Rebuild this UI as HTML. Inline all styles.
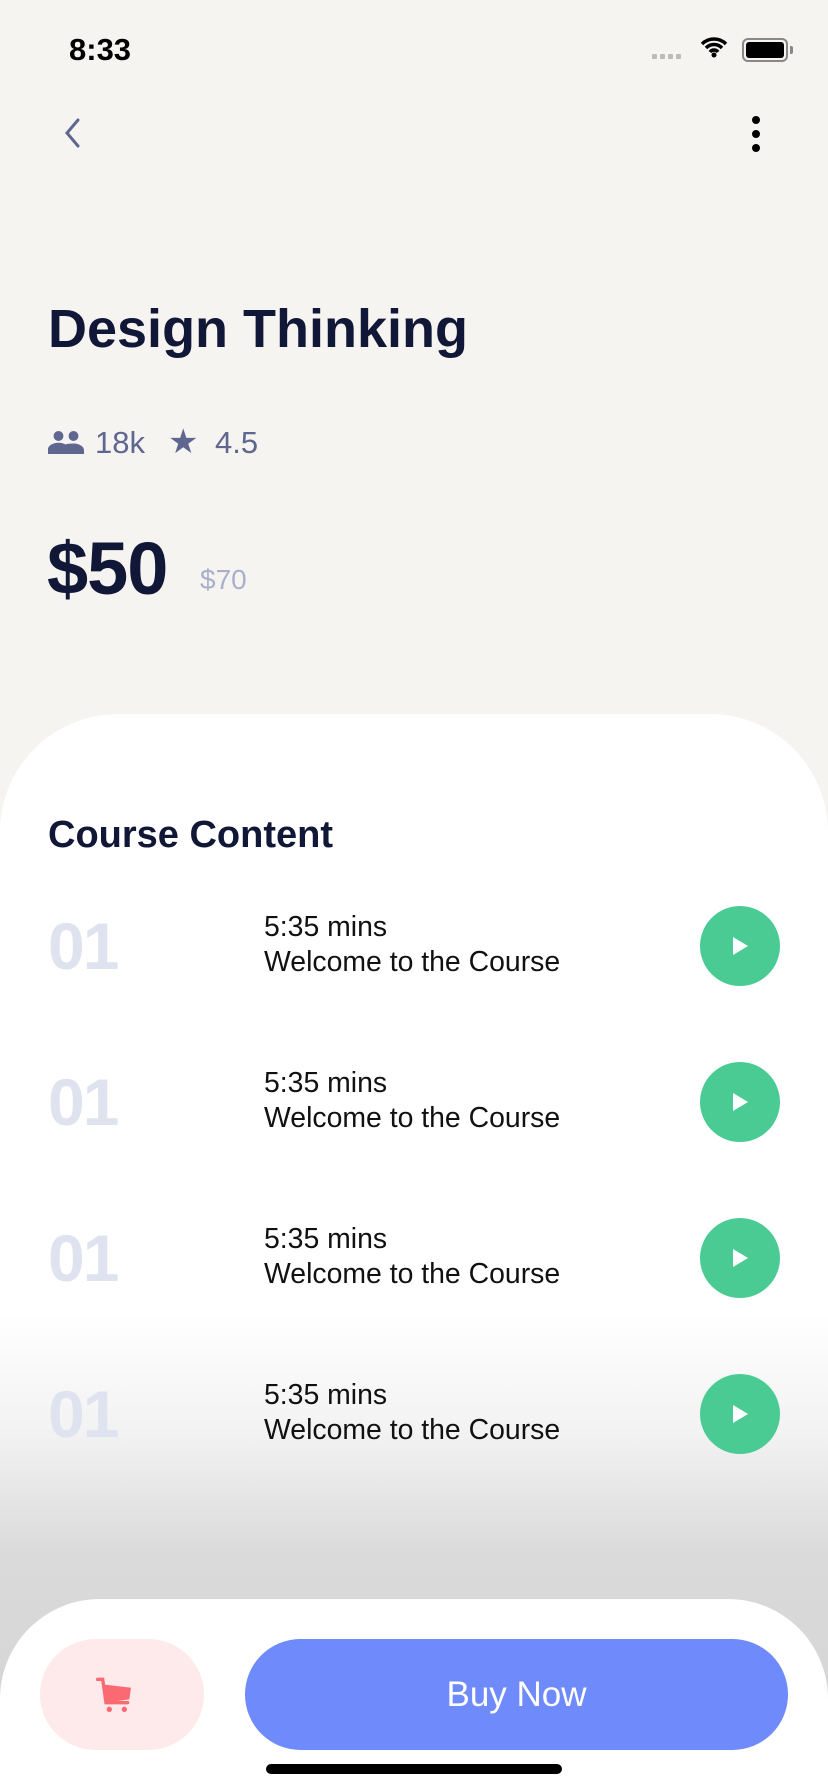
<!DOCTYPE html>
<html style="background:#fff"><head><meta charset="utf-8"><style>
*{margin:0;padding:0;box-sizing:border-box}
html,body{width:828px;height:1792px;overflow:hidden}
body{background:#f5f4f0;font-family:"Liberation Sans",sans-serif;position:relative}
.a{position:absolute}
.sheet{left:0;top:714px;width:828px;height:1078px;border-radius:118px 118px 0 0;background:linear-gradient(to bottom,#fff 0,#fff 600px,#f2f2f2 720px,#dadada 840px,#d3d3d3 1078px)}
.num{left:48px;font-size:66px;font-weight:bold;color:#dfe3f0;letter-spacing:-2px}
.t{left:264px;font-size:28.4px;color:#111;line-height:35px}
.play{left:700px;width:80px;height:80px;border-radius:50%;background:#4bcb94}
.play:after{content:"";position:absolute;left:33px;top:31px;border-left:15px solid #fff;border-top:9px solid transparent;border-bottom:9px solid transparent}
</style></head><body>
<div class="a" style="left:69px;top:32px;font-size:31px;font-weight:bold;color:#000">8:33</div>
<div class="a" style="left:652px;top:54px;display:flex;gap:3px"><i style="width:5px;height:5px;background:#bbb;border-radius:1px"></i><i style="width:5px;height:5px;background:#bbb;border-radius:1px"></i><i style="width:5px;height:5px;background:#bbb;border-radius:1px"></i><i style="width:5px;height:5px;background:#bbb;border-radius:1px"></i></div>
<svg class="a" style="left:700px;top:36px" width="28" height="22" viewBox="0 0 28 22"><path d="M2 8a17 17 0 0 1 24 0M6 12a11 11 0 0 1 16 0M10 16a5 5 0 0 1 8 0" stroke="#000" stroke-width="3.5" fill="none"/><circle cx="14" cy="19" r="2.5"/></svg>
<div class="a" style="left:742px;top:38px;width:46px;height:24px;border:2px solid #888;border-radius:6px;padding:2px"><div style="background:#000;width:100%;height:100%;border-radius:3px"></div></div>
<div class="a" style="left:790px;top:46px;width:3px;height:8px;background:#888;border-radius:0 2px 2px 0"></div>
<svg class="a" style="left:60px;top:116px" width="24" height="34"><path d="M18 4L7 17l11 13" stroke="#5f6690" stroke-width="3" fill="none" stroke-linecap="round"/></svg>
<div class="a" style="left:752px;top:116px;width:8px"><div style="width:8px;height:8px;border-radius:50%;background:#000;margin-bottom:6px"></div><div style="width:8px;height:8px;border-radius:50%;background:#000;margin-bottom:6px"></div><div style="width:8px;height:8px;border-radius:50%;background:#000"></div></div>
<div class="a" style="left:48px;top:298px;font-size:54px;font-weight:bold;color:#111736">Design Thinking</div>
<svg class="a" style="left:48px;top:430px" width="36" height="24" viewBox="0 0 24 16"><circle cx="7" cy="4" r="3.3" fill="#5f6690"/><circle cx="17" cy="4" r="3.3" fill="#5f6690"/><path d="M0 16v-3c0-3 4-4.5 7-4.5s7 1.5 7 4.5v3zM12 16v-3c0-1-.5-2-1.5-3 2-.8 4-1 6.5-1 3 0 7 1.5 7 4.5v2.5z" fill="#5f6690"/></svg>
<div class="a" style="left:95px;top:425px;font-size:31px;color:#5f6690">18k</div>
<div class="a" style="left:168px;top:422px;font-size:34px;color:#5f6690">★</div>
<div class="a" style="left:215px;top:425px;font-size:31px;color:#5f6690">4.5</div>
<div class="a" style="left:47px;top:526px;font-size:74px;font-weight:bold;color:#111736;letter-spacing:-1px">$50</div>
<div class="a" style="left:200px;top:564px;font-size:28px;color:#aab0cc">$70</div>
<div class="a sheet"></div>
<div class="a" style="left:48px;top:814px;font-size:38px;font-weight:bold;color:#111736">Course Content</div>
<div class="a num" style="top:908px">01</div><div class="a t" style="top:910px">5:35 mins<br>Welcome to the Course</div><div class="a play" style="top:906px"></div>
<div class="a num" style="top:1064px">01</div><div class="a t" style="top:1066px">5:35 mins<br>Welcome to the Course</div><div class="a play" style="top:1062px"></div>
<div class="a num" style="top:1220px">01</div><div class="a t" style="top:1222px">5:35 mins<br>Welcome to the Course</div><div class="a play" style="top:1218px"></div>
<div class="a num" style="top:1376px">01</div><div class="a t" style="top:1378px">5:35 mins<br>Welcome to the Course</div><div class="a play" style="top:1374px"></div>
<div class="a" style="left:0;top:1599px;width:828px;height:193px;background:#fff;border-radius:100px 100px 0 0"></div>
<div class="a" style="left:40px;top:1639px;width:164px;height:111px;border-radius:56px;background:#feeaea"></div>
<svg class="a" style="left:94px;top:1676px" width="44" height="40" viewBox="0 0 26 24"><path d="M2 2h3l2 14h13" stroke="#fb6a72" stroke-width="2" fill="none" stroke-linecap="round"/><path d="M5 5l17 2-1 7-14 2z" fill="#fb6a72"/><circle cx="9" cy="20" r="1.6" fill="#fb6a72"/><circle cx="18" cy="20" r="1.6" fill="#fb6a72"/></svg>
<div class="a" style="left:245px;top:1639px;width:543px;height:111px;border-radius:56px;background:#6f8afa;color:#fff;font-size:35px;text-align:center;line-height:111px">Buy Now</div>
<div class="a" style="left:266px;top:1764px;width:296px;height:10px;border-radius:5px;background:#000"></div>
</body></html>
